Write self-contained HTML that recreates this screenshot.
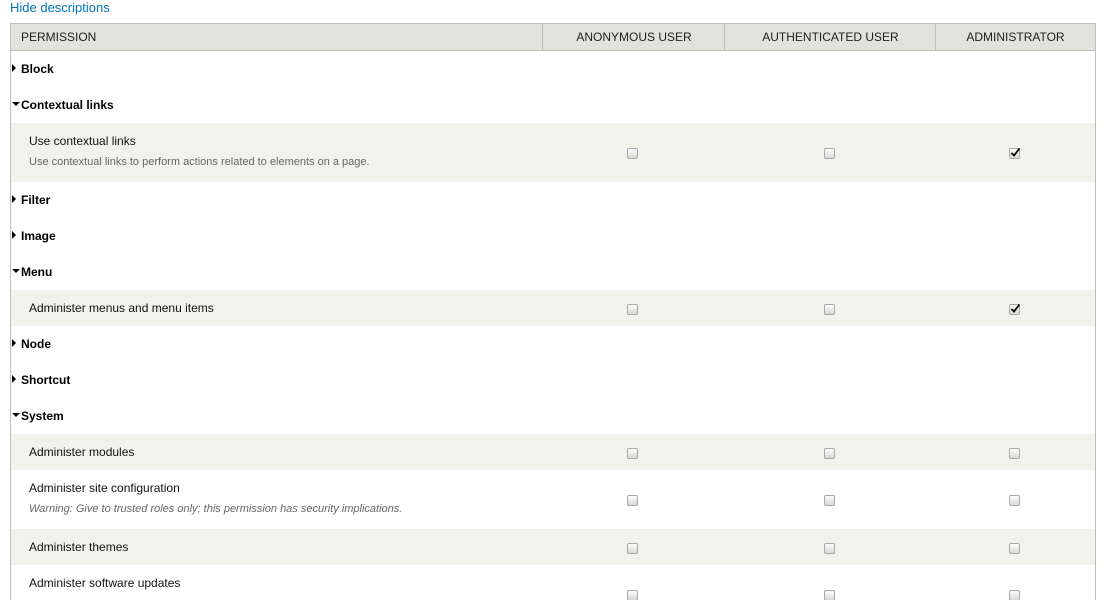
<!DOCTYPE html>
<html><head><meta charset="utf-8"><style>
html,body{margin:0;width:1106px;height:600px;overflow:hidden;background:#fff;font-family:"Liberation Sans",Arial,sans-serif;position:relative}
a.hd{position:absolute;left:10px;top:0px;font-size:13px;color:#0074bd;text-decoration:none}
.tbl{position:absolute;left:10px;top:23px;width:1084px;height:577px;border:1px solid #bfbfba;border-bottom:none}
.hdr{position:absolute;left:0;top:0;width:1084px;height:26px;background:#e1e2dc;border-bottom:1px solid #bfbfba;font-size:12px;color:#222}
.hdr div{position:absolute;top:0;height:26px;line-height:27px}
.c{text-align:center}
.vl{position:absolute;top:0;width:1px;height:26px;background:#bfbfba}
.row{position:absolute;left:0;width:1084px}
.g{background:#f2f2ed}
.cat{font-size:12px;font-weight:bold;color:#000;position:absolute;left:10px}
.tri{position:absolute;left:1px;width:0;height:0}
.tr{border-top:4px solid transparent;border-bottom:4px solid transparent;border-left:4px solid #000}
.td{border-left:4px solid transparent;border-right:4px solid transparent;border-top:4px solid #000}
.t{position:absolute;left:18px;font-size:12px;color:#111}
.d{position:absolute;left:18px;font-size:11px;color:#666}
.cb{position:absolute;width:9px;height:9px;border:1px solid #a8a8a8;border-radius:2px;background:linear-gradient(#fdfdfd,#d8d8d8)}
.cb svg{position:absolute;left:0;top:-2px}
</style></head><body>
<a class="hd" href="#">Hide descriptions</a>
<div class="tbl">
<div class="hdr">
<div style="left:10px">PERMISSION</div>
<div class="c" style="left:532px;width:182px">ANONYMOUS USER</div>
<div class="c" style="left:714px;width:211px">AUTHENTICATED USER</div>
<div class="c" style="left:925px;width:159px">ADMINISTRATOR</div>
<div class="vl" style="left:531px"></div><div class="vl" style="left:713px"></div><div class="vl" style="left:924px"></div>
</div>
</div>
<div id="rows" style="position:absolute;left:11px;top:0"></div>
<script>
var rows=[
['c','Block',51,36,0],['c','Contextual links',87,36,1],
['p','Use contextual links',123,59,'Use contextual links to perform actions related to elements on a page.',0,'n'],
['c','Filter',182,36,0],['c','Image',218,36,0],['c','Menu',254,36,1],
['p','Administer menus and menu items',290,36,'',0,'n'],
['c','Node',326,36,0],['c','Shortcut',362,36,0],['c','System',398,36,1],
['p','Administer modules',434,36,'',0,''],
['p','Administer site configuration',470,59,'Warning: Give to trusted roles only; this permission has security implications.',1,''],
['p','Administer themes',529,36,'',0,''],
['p','Administer software updates',565,59,'',0,'']];
var h='',gi=0;
rows.forEach(function(r){
 var top=r[2],ht=r[3];
 if(r[0]=='c'){
  gi=0;
  h+='<div class="row" style="top:'+top+'px;height:'+ht+'px"><div class="tri '+(r[4]?'td':'tr')+'" style="top:'+(r[4]?15:13)+'px"></div><div class="cat" style="top:11px">'+r[1]+'</div></div>';
 } else {
  gi++;
  var g=(gi%2==1)?' g':'';
  h+='<div class="row'+g+'" style="top:'+top+'px;height:'+ht+'px">';
  h+='<div class="t" style="top:11px">'+r[1]+'</div>';
  if(r[4]) h+='<div class="d" style="top:33px;'+(r[5]?'font-style:italic':'')+'">'+r[4]+'</div>';
  var cy=(r[4]?25:14);
  if(r[1]=='Administer software updates')cy=25;
  [616,813,998].forEach(function(x,i){
   h+='<div class="cb" style="left:'+x+'px;top:'+cy+'px">'+((i==2&&r[6]=='n')?'<svg width="11" height="11" viewBox="0 0 11 11"><path d="M1.5 6 L4 8.5 L9.5 1.5" stroke="#000" stroke-width="1.8" fill="none"/></svg>':'')+'</div>';
  });
  h+='</div>';
 }
});
document.getElementById('rows').innerHTML=h;
</script>
</body></html>
